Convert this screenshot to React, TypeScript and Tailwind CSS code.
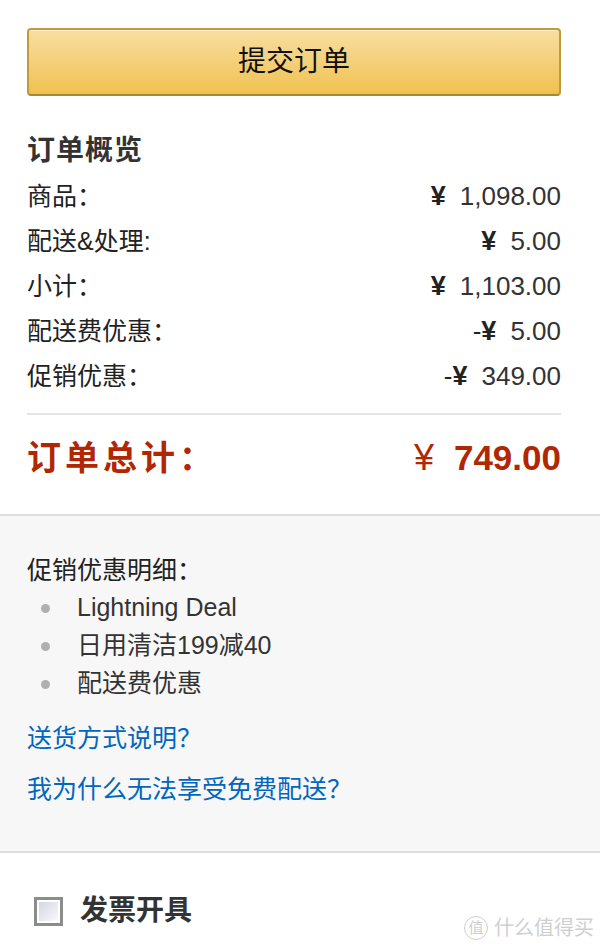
import React from 'react';

const cjk = { fontFamily: '"Liberation Sans", "Noto Sans CJK SC", sans-serif' };
const num = { fontFamily: '"Liberation Sans", Arial, sans-serif' };

interface Line {
  label: string;
  amount: string;
  minus?: boolean;
}

const LINES: Line[] = [
  { label: '商品：', amount: '1,098.00' },
  { label: '配送&处理:', amount: '5.00' },
  { label: '小计：', amount: '1,103.00' },
  { label: '配送费优惠：', amount: '5.00', minus: true },
  { label: '促销优惠：', amount: '349.00', minus: true },
];

const PROMOS = ['Lightning Deal', '日用清洁199减40', '配送费优惠'];

export default function App() {
  return (
    <div className="relative w-[600px] min-h-[947px] bg-white text-[#333]" style={cjk}>
      {/* Summary */}
      <div className="pl-[27px] pr-[39px] pt-[28px]">
        <button className="flex h-[68px] w-full items-center justify-center rounded-[4px] border-2 border-[#c19a3c] border-b-[#a88734] bg-gradient-to-b from-[#f8dea0] to-[#f0c14b] text-[28px] text-[#111] shadow-[inset_0_1px_0_rgba(255,255,255,0.5)]">
          提交订单
        </button>

        <h2 className="mt-[37px] text-[28px] font-bold leading-[36px] tracking-[1px] text-[#333]">订单概览</h2>

        <div className="mt-[5px]">
          {LINES.map((line) => (
            <div key={line.label} className="flex h-[45px] items-center justify-between">
              <span className="text-[25px] text-[#222]">{line.label}</span>
              <span className="flex items-center text-[#222]" style={num}>
                {line.minus && <span className="text-[26px]">-</span>}
                <span className="text-[27px] font-semibold">¥</span>
                <span className="ml-[14px] text-[26px] text-[#333]">{line.amount}</span>
              </span>
            </div>
          ))}
        </div>

        <div className="mt-[14px] h-[2px] bg-[#e4e4e4]" />

        <div className="mt-[18px] flex h-[50px] items-center justify-between text-[#b12704]">
          <span className="text-[34px] font-bold tracking-[4px]">订单总计：</span>
          <span className="flex items-center" style={num}>
            <span className="text-[36px]">¥</span>
            <span className="ml-[20px] text-[35px] font-bold">749.00</span>
          </span>
        </div>
      </div>

      {/* Promotions */}
      <div className="mt-[31px] border-y-2 border-[#dddddd] bg-[#f7f7f7] px-[27px] pt-[35px] pb-[43px]">
        <div className="text-[25px] leading-[38px] text-[#222]">促销优惠明细：</div>
        <ul>
          {PROMOS.map((p) => (
            <li key={p} className="flex h-[38px] items-center">
              <span className="ml-[14px] h-[9px] w-[9px] rounded-full bg-[#b0b0b0]" />
              <span className="ml-[27px] text-[25px] text-[#333]">{p}</span>
            </li>
          ))}
        </ul>
        <div className="mt-[16px] text-[25px] leading-[38px] text-[#0066c0]">送货方式说明？</div>
        <div className="mt-[13px] text-[25px] leading-[38px] text-[#0066c0]">我为什么无法享受免费配送？</div>
      </div>

      {/* Invoice */}
      <div className="flex items-center px-[34px] pt-[37px]">
        <span className="flex h-[29px] w-[29px] items-center justify-center border-[3px] border-[#8c8c8c] bg-white">
          <span className="h-[19px] w-[19px] bg-gradient-to-br from-[#d4d6e2] to-[#fafafa]" />
        </span>
        <span className="ml-[17px] text-[28px] font-bold text-[#333]">发票开具</span>
      </div>

      {/* watermark */}
      <div className="absolute bottom-[4px] right-[6px] flex items-center text-[20px] text-[#cfcfcf]">
        <span className="flex h-[24px] w-[24px] items-center justify-center rounded-full border border-[#cfcfcf] text-[15px]">
          值
        </span>
        <span className="ml-[6px]">什么值得买</span>
      </div>
    </div>
  );
}
